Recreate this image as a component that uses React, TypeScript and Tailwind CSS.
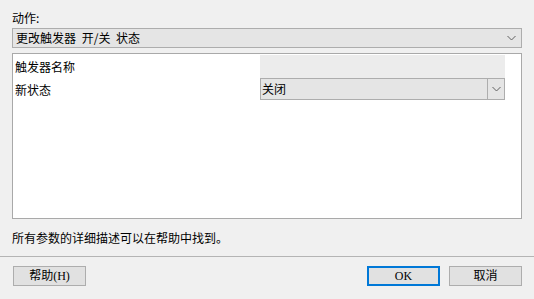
import React from 'react'

const font = { fontFamily: '"Noto Sans CJK SC", "Liberation Sans", sans-serif' }

function Chevron() {
  return (
    <svg width="9" height="6" viewBox="0 0 9 6" className="text-[#606060]">
      <polyline points="0.5,1 4.5,5 8.5,1" fill="none" stroke="currentColor" strokeWidth="1" />
    </svg>
  )
}

function Button({ label, primary }: { label: string; primary?: boolean }) {
  return (
    <button
      className={
        'w-[73px] h-[20px] flex items-center justify-center bg-[#e1e1e1] text-[12px] leading-none text-black ' +
        (primary ? 'border-2 border-[#0078d7]' : 'border border-[#adadad]')
      }
      style={{ fontFamily: '"Liberation Serif", "Noto Sans CJK SC", serif' }}
    >
      {label}
    </button>
  )
}

export default function App() {
  return (
    <div className="w-[534px] h-[299px] bg-[#f0f0f0] flex flex-col text-[12px] text-black overflow-hidden" style={font}>
      <div className="px-3 pt-[10px] flex flex-col">
        <div className="h-[16px] leading-[16px]">动作:</div>
        <div className="mt-[2px] h-[20px] border border-[#adadad] bg-[#e5e5e5] flex items-center justify-between pl-[3px] pr-[5px]">
          <span className="leading-none [word-spacing:3px]">更改触发器 开/关 状态</span>
          <Chevron />
        </div>

        {/* parameter grid */}
        <div className="mt-[5px] h-[166px] border border-[#a9a9a9] bg-white pt-[1px] pl-[2px] pr-[16px]">
          <div className="grid grid-cols-[245px_1fr]">
            <div className="h-[23px] flex items-center leading-none">触发器名称</div>
            <div className="h-[23px] bg-[#ececec]" />
            <div className="h-[23px] flex items-center leading-none">新状态</div>
            <div className="h-[22px] border border-[#adadad] bg-[#e5e5e5] flex items-center justify-between">
              <span className="pl-[1px] leading-none">关闭</span>
              <div className="w-[17px] h-full border-l border-[#adadad] flex items-center justify-center">
                <Chevron />
              </div>
            </div>
          </div>
        </div>

        <div className="mt-[12px] h-[14px] leading-[14px]">所有参数的详细描述可以在帮助中找到。</div>
      </div>

      <div className="mt-[11px] h-px bg-[#b4b4b4]" />

      <div className="mt-[9px] pl-[13px] pr-[12px] flex items-center">
        <Button label="帮助(H)" />
        <div className="flex-1" />
        <Button label="OK" primary />
        <div className="w-[9px]" />
        <Button label="取消" />
      </div>
    </div>
  )
}
